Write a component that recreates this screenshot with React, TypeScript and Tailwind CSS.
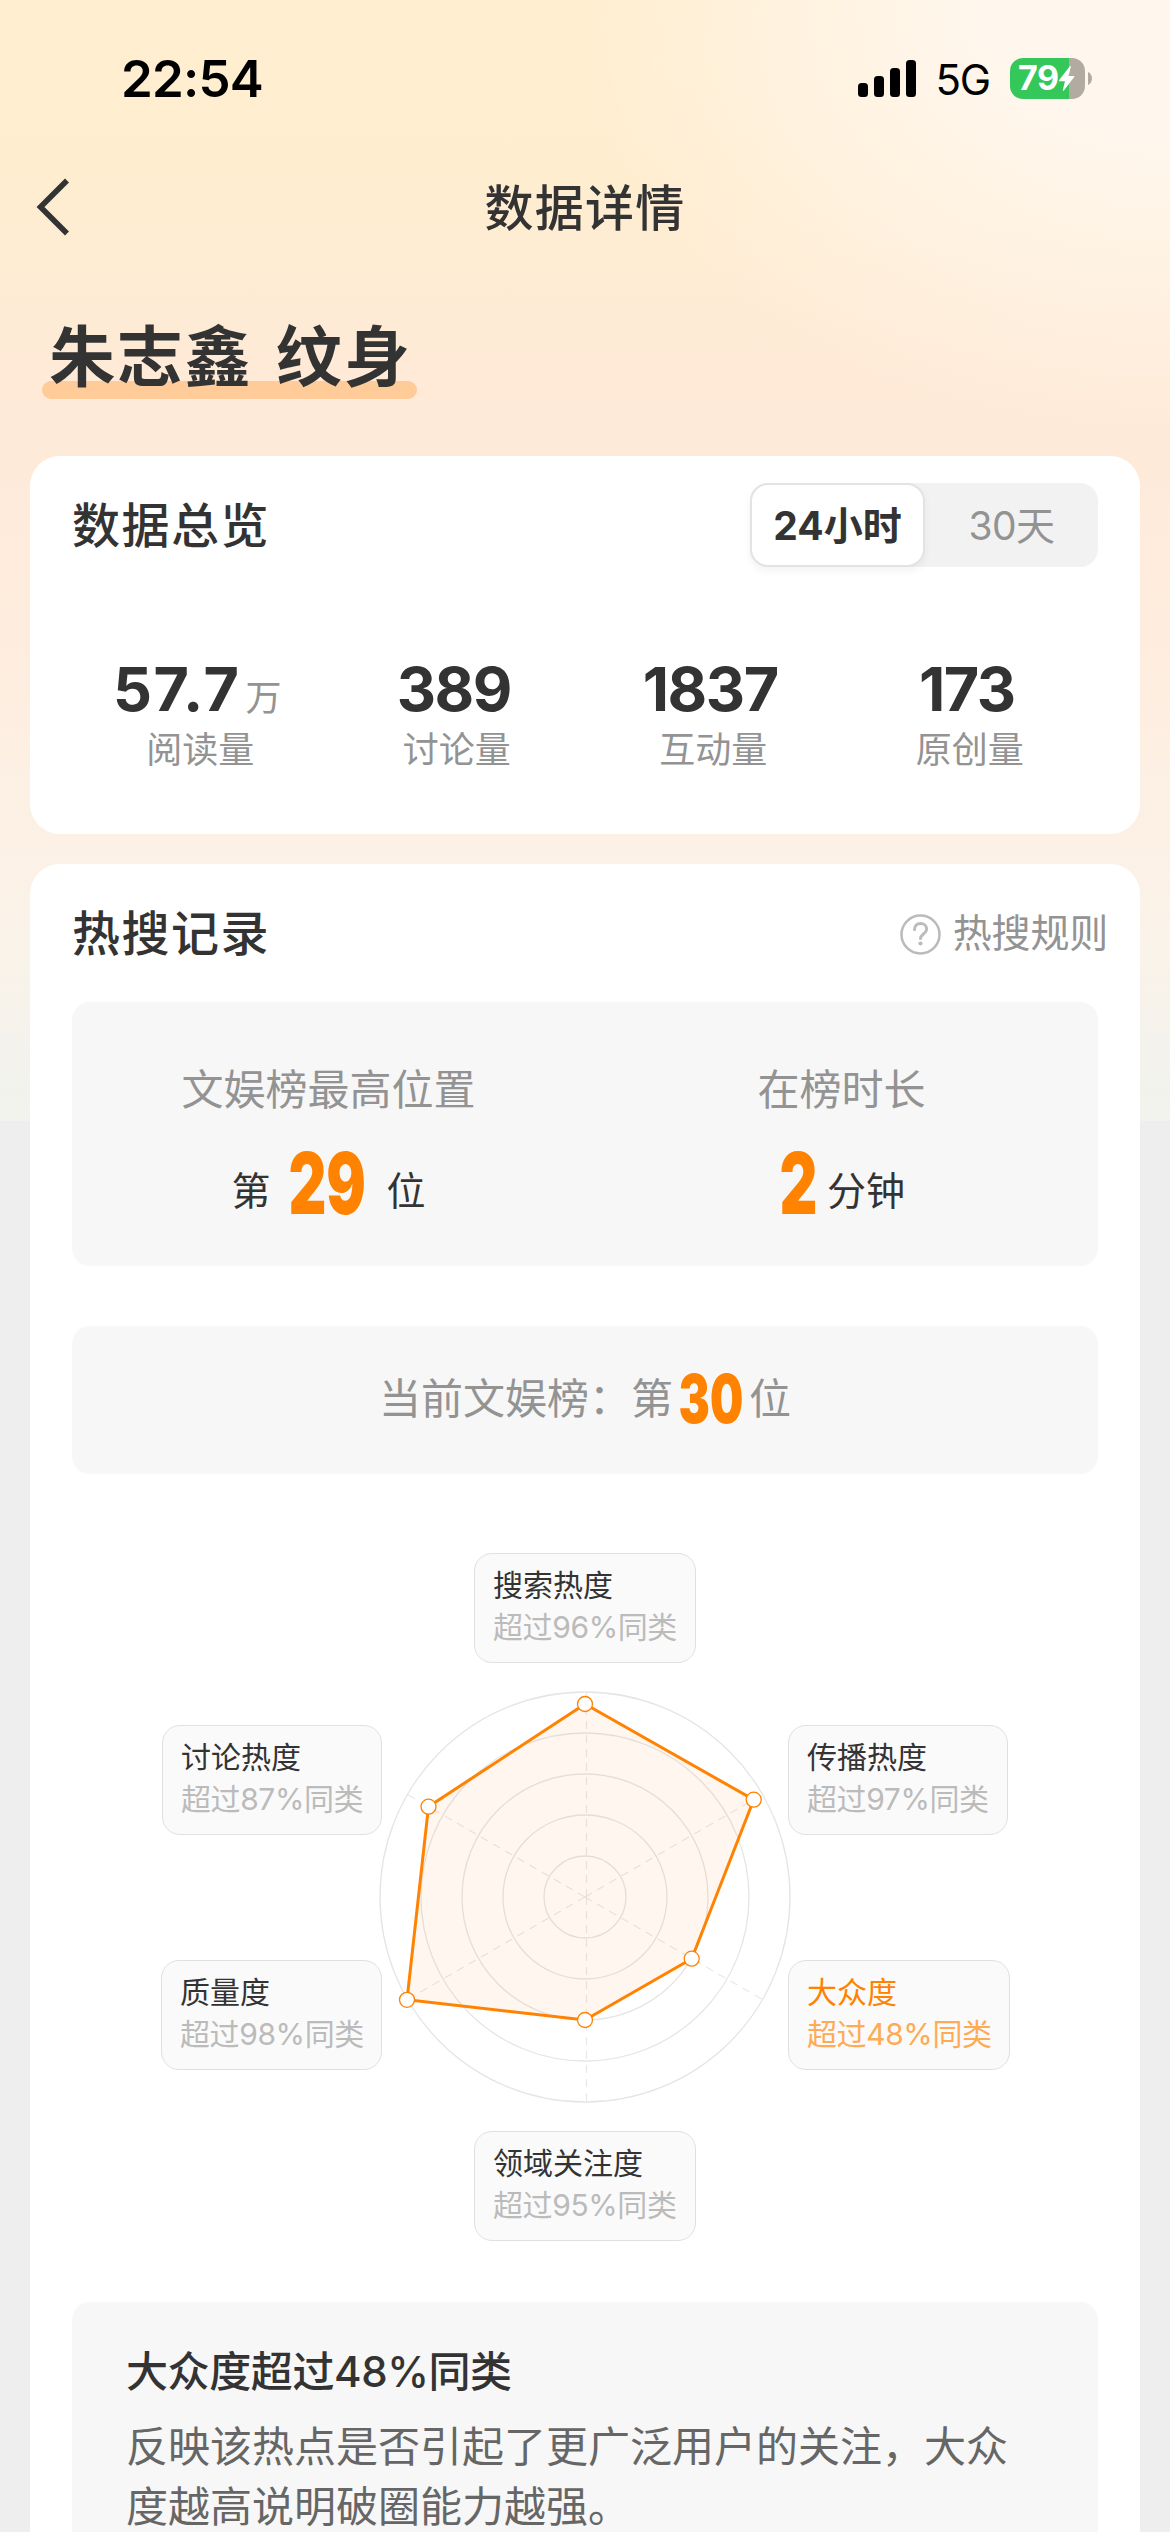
import { CSSProperties } from 'react';

interface Stat {
  value: string;
  unit?: string;
  label: string;
}

interface Dimension {
  name: string;
  percent: number;
  className: string;
  active?: boolean;
}

const stats: Stat[] = [
  { value: '57.7', unit: '万', label: '阅读量' },
  { value: '389', label: '讨论量' },
  { value: '1837', label: '互动量' },
  { value: '173', label: '原创量' },
];

const dimensions: Dimension[] = [
  { name: '搜索热度', percent: 96, className: 'left-[444px] top-0 w-[222px]' },
  { name: '讨论热度', percent: 87, className: 'left-[132px] top-[172px] w-[220px]' },
  { name: '传播热度', percent: 97, className: 'left-[758px] top-[172px] w-[220px]' },
  { name: '质量度', percent: 98, className: 'left-[131px] top-[407px] w-[221px]' },
  { name: '大众度', percent: 48, className: 'left-[758px] top-[407px] w-[222px]', active: true },
  { name: '领域关注度', percent: 95, className: 'left-[444px] top-[578px] w-[222px]' },
];

const rings = [41, 82, 123, 164, 205];

const points = [
  [555, 151],
  [723.7, 246.7],
  [661.7, 405.7],
  [555, 467],
  [377, 446.8],
  [398.5, 253.7],
];

const pageFont: CSSProperties = {
  fontFamily: '"Inter", "Noto Sans CJK SC", sans-serif',
};

const StatusBar = () => (
  <div className="flex h-[138px] items-center justify-between pt-[18px] pr-[78px] pl-[121px] text-black">
    <span className="pt-px text-[51px] leading-none font-semibold tracking-[-0.8px]">22:54</span>
    <div className="flex items-center">
      <svg width="60" height="38" viewBox="0 0 60 38">
        <rect x="0" y="24" width="10" height="14" rx="3.5" />
        <rect x="16" y="17" width="10" height="21" rx="3.5" />
        <rect x="32" y="9" width="10" height="29" rx="3.5" />
        <rect x="48" y="1" width="10" height="37" rx="3.5" />
      </svg>
      <span className="ml-[18px] pt-[3px] text-[42px] leading-none tracking-[-1.2px]">5G</span>
      <div className="ml-[20px] flex items-center">
        <div className="flex h-[41px] w-[75px] items-center rounded-[13px] bg-[linear-gradient(90deg,#34c759_79%,#b1aba1_79%)] pl-[8px] text-white">
          <span className="text-[34px] leading-none font-bold tracking-[-0.5px]">79</span>
          <svg className="-ml-px" width="17" height="25" viewBox="0 0 17 25" fill="#fff">
            <path d="M12 0 1 14.2c-.4.6 0 1 .6 1H7L4.8 24c-.1.8.6 1 1.1.4L16.2 11c.4-.6.1-1.1-.6-1.1H10.5L12.8 1c.1-.9-.4-1.3-.8-1Z" />
          </svg>
        </div>
        <svg className="ml-[3px]" width="4" height="13" viewBox="0 0 4 13" fill="#b1aba1">
          <path d="M0 0c2.5 1 4 3.6 4 6.500S2.5 12 0 13Z" />
        </svg>
      </div>
    </div>
  </div>
);

const NavBar = () => (
  <div className="grid h-[140px] grid-cols-[120px_1fr_120px] items-center">
    <svg className="ml-[34px]" width="36" height="60" viewBox="0 0 36 60" fill="none" stroke="#333" strokeWidth="5.6">
      <path d="M33 2.5 6.5 29 33 55.5" />
    </svg>
    <h1 className="pt-[2px] text-center text-[49px] font-medium tracking-[1.2px] text-[#333]">数据详情</h1>
  </div>
);

const Overview = () => (
  <section className="h-[378px] rounded-[30px] bg-white px-[42px] pt-[27px]">
    <div className="flex h-[84px] items-center justify-between">
      <h2 className="pt-[2px] text-[48px] font-medium tracking-[1.5px] text-[#333]">数据总览</h2>
      <div className="flex h-[84px] w-[348px] rounded-[18px] bg-[#f2f2f2]">
        <div className="flex w-[175px] items-center justify-center rounded-[18px] border-2 border-[#e3e3e3] bg-white pt-[2px] text-[39px] font-bold text-[#333] shadow-[0_4px_8px_rgba(0,0,0,0.05)]">
          24小时
        </div>
        <div className="flex flex-1 items-center justify-center pt-[2px] text-[39px] tracking-[-0.5px] text-[#939393]">30天</div>
      </div>
    </div>
    <div className="mt-[89px] grid grid-cols-4">
      {stats.map((stat) => (
        <div key={stat.label} className="flex flex-col items-center">
          <div className="flex h-[66px] items-baseline pr-[6px] leading-[66px]">
            <span className={`text-[61px] font-bold text-[#333] ${stat.unit ? 'tracking-[1.6px]' : 'tracking-[-1.5px]'}`}>
              {stat.value}
            </span>
            {stat.unit && <span className="ml-[5px] text-[36px] text-[#939393]">{stat.unit}</span>}
          </div>
          <span className="mt-[3px] text-[36px] leading-[50px] text-[#939393]">{stat.label}</span>
        </div>
      ))}
    </div>
  </section>
);

// Condensed heavy numerals used for the rankings
const Digits = ({ children, className }: { children: string; className: string }) => (
  <span className={`inline-flex translate-y-[9px] justify-center leading-none font-black text-[#ff8200] ${className}`}>
    <span className="scale-x-[0.69]">{children}</span>
  </span>
);

const Radar = () => (
  <div className="relative -mx-[42px] mt-[79px] h-[688px]">
    <svg className="absolute inset-0" width="1110" height="688" viewBox="0 0 1110 688" fill="none">
      <g stroke="#e5e5e5" strokeWidth="1.3">
        {rings.map((r) => (
          <circle key={r} cx="555" cy="344" r={r} />
        ))}
      </g>
      <g stroke="#e8e8e8" strokeWidth="1.2" strokeDasharray="8 6">
        <path d="M556.5 344V139M556.5 344V549" />
        <path d="M555 344 732.5 241.5M555 344 732.5 446.5M555 344 377.5 446.5M555 344 377.5 241.5" />
      </g>
      <polygon points={points.map((p) => p.join(',')).join(' ')} fill="#ff7820" fillOpacity="0.065" stroke="#ff8200" strokeWidth="3" />
      {points.map(([x, y]) => (
        <circle key={`${x}-${y}`} cx={x} cy={y} r="7.5" fill="#fff" stroke="#ff8200" strokeWidth="1.3" />
      ))}
    </svg>
    {dimensions.map((item) => (
      <div
        key={item.name}
        className={`absolute h-[110px] rounded-[18px] border border-[#e0e0e0] bg-[#fafafa] pt-[10px] pl-[18px] text-[30px] leading-[42px] whitespace-nowrap ${item.className}`}
      >
        <p className={item.active ? 'text-[#ff8200]' : 'text-[#333]'}>{item.name}</p>
        <p className={`tracking-[-0.4px] ${item.active ? 'text-[#ffaa55]' : 'text-[#bbb]'}`}>超过{item.percent}%同类</p>
      </div>
    ))}
  </div>
);

const HotSearch = () => (
  <section className="h-[1668px] rounded-t-[30px] bg-white px-[42px]">
    <div className="-mr-[10px] flex h-[138px] items-center justify-between">
      <h2 className="pt-[1px] text-[48px] font-medium tracking-[1.5px] text-[#333]">热搜记录</h2>
      <div className="flex items-center gap-[12px] text-[39px] tracking-[-0.2px] text-[#939393]">
        <svg className="mt-[3px]" width="41" height="41" viewBox="0 0 41 41" fill="none" stroke="#bbb" strokeWidth="2.5" strokeLinecap="round">
          <circle cx="20.5" cy="20.5" r="19" />
          <path d="M14.5 15.5c0-3.5 2.6-6 6-6s6.2 2.3 6.2 5.5c0 4.6-6.2 5-6.2 9.500" strokeWidth="3" />
          <circle cx="20.5" cy="29.5" r="2.1" fill="#bbb" stroke="none" />
        </svg>
        热搜规则
      </div>
    </div>

    <div className="grid h-[264px] grid-cols-2 rounded-[18px] bg-[#f7f7f7] pt-[58px]">
      <div className="flex flex-col items-center text-[#333]">
        <p className="text-[42px] leading-[60px] text-[#939393]">文娱榜最高位置</p>
        <p className="mt-[12px] flex h-[90px] items-baseline text-[39px] leading-[90px]">
          第<Digits className="mr-[19px] ml-[17px] w-[80px] text-[85px]">29</Digits>位
        </p>
      </div>
      <div className="flex flex-col items-center text-[#333]">
        <p className="text-[42px] leading-[60px] text-[#939393]">在榜时长</p>
        <p className="mt-[12px] flex h-[90px] items-baseline text-[39px] leading-[90px]">
          <Digits className="mr-[9px] w-[40px] text-[85px]">2</Digits>分钟
        </p>
      </div>
    </div>

    <div className="mt-[60px] flex h-[148px] items-center justify-center rounded-[18px] bg-[#f7f7f7] pb-[6px]">
      <p className="flex items-baseline text-[42px] leading-[80px] text-[#939393]">
        当前文娱榜：第<Digits className="mr-[6px] ml-[5px] w-[65px] text-[68px]">30</Digits>位
      </p>
    </div>

    <Radar />

    <div className="mt-[61px] h-[230px] rounded-t-[18px] bg-[#f7f7f7] pt-[40px] pr-[60px] pl-[54px]">
      <h3 className="text-[42px] leading-[60px] font-medium tracking-[-0.4px] text-[#333]">大众度超过48%同类</h3>
      <p className="mt-[15px] text-[42px] leading-[60px] text-[#666]">
        反映该热点是否引起了更广泛用户的关注，大众度越高说明破圈能力越强。
      </p>
    </div>
  </section>
);

export default function App() {
  return (
    <div
      style={pageFont}
      lang="zh-CN"
      className="h-[2532px] w-[1170px] overflow-hidden bg-[#eee] bg-[radial-gradient(ellipse_600px_440px_at_100%_0%,#fff7ee_30%,#fff7ee00),linear-gradient(180deg,#ffeecf_0px,#ffedd1_200px,#feebd6_330px,#feead9_450px,#feeddf_650px,#fcf1e6_850px,#f9f3e9_960px,#f3f2ed_1060px,#f2f2ee_1121px)] bg-[length:1170px_1121px] bg-no-repeat"
    >
      <StatusBar />
      <NavBar />
      <div className="flex h-[178px] items-start px-[42px] pt-[37px]">
        <h1 className="relative isolate h-[84px] w-[375px] pl-[7px] text-[66px] leading-[85px] font-bold tracking-[1.8px] whitespace-nowrap text-[#333] [word-spacing:6px]">
          <span className="absolute bottom-0 left-0 -z-10 h-[18px] w-full rounded-full bg-[#ffcb98]" />
          朱志鑫 纹身
        </h1>
      </div>
      <main className="flex flex-col gap-[30px] px-[30px]">
        <Overview />
        <HotSearch />
      </main>
    </div>
  );
}
